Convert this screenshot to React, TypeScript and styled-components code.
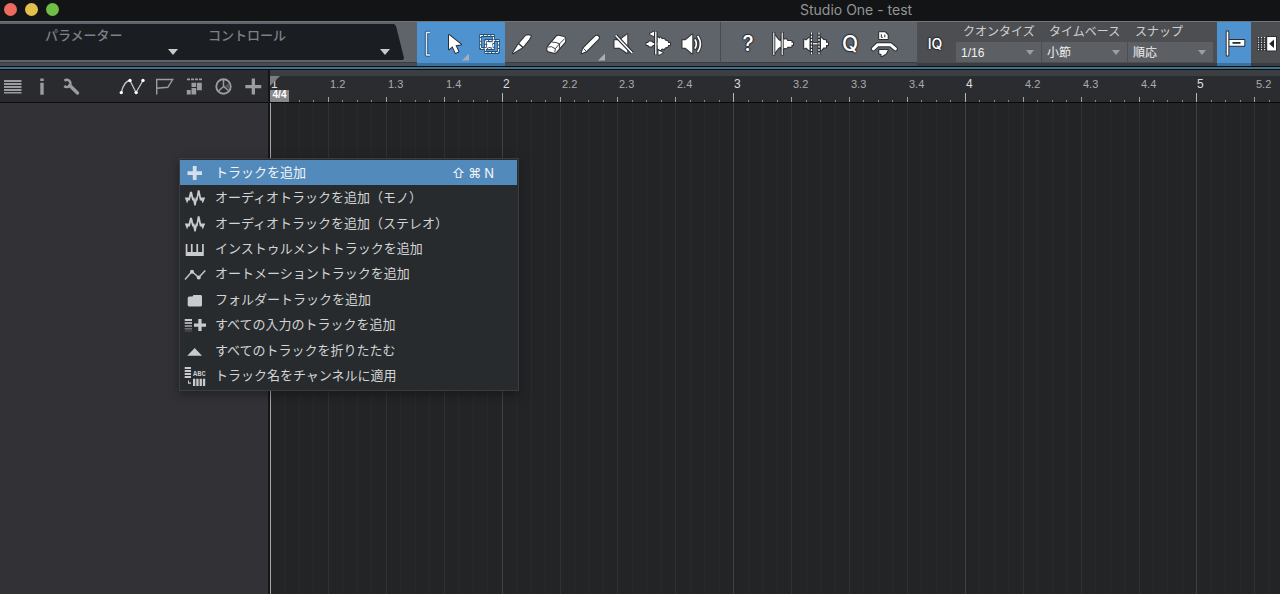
import React from "react";
import styled, { createGlobalStyle, css } from "styled-components";

const GlobalStyle = createGlobalStyle`
  * { box-sizing: border-box; }
  body {
    margin: 0;
    background: #222426;
    color: #d4d5d6;
    font-family: "Liberation Sans", "Noto Sans CJK JP", sans-serif;
    font-size: 12px;
  }
  button, select { font: inherit; color: inherit; border: 0; padding: 0; margin: 0; background: none; }
  svg { display: block; flex: none; }
`;

const Window = styled.div`
  min-height: 100vh;
  display: flex;
  flex-direction: column;
  overflow: hidden;
`;

const TitleBar = styled.header`
  height: 21px;
  flex: none;
  display: flex;
  align-items: center;
  background: #131416;
  padding-bottom: 2px;
`;

const Lights = styled.div`
  width: 800px;
  flex: none;
  display: flex;
  gap: 8px;
  padding-left: 4px;
`;

const Light = styled.button<{ $color: string }>`
  width: 13px;
  height: 13px;
  border-radius: 50%;
  background: ${(p) => p.$color};
`;

const Title = styled.h1`
  margin: 0;
  font: 400 14px/18px Inter, "Liberation Sans", sans-serif;
  color: #949596;
  white-space: nowrap;
`;

const Toolbar = styled.div`
  height: 46px;
  flex: none;
  display: flex;
  background: #5f646b;
  border-top: 1px solid #71757b;
  border-bottom: 1px solid #0e0f10;
  box-shadow: inset 0 -3px 0 #484c52, inset 0 -4px 0 #3a3d42;
`;

const InfoPanel = styled.div`
  width: 405px;
  height: 36px;
  flex: none;
  margin: 2px 12px 0 0;
  display: flex;
  background: #1a1d22;
  clip-path: polygon(0 0, 394px 0, 396px 2px, 404px 34px, 403px 36px, 0 36px);
`;

const InfoColumn = styled.div<{ $width: number; $indent: number; $end: number }>`
  width: ${(p) => p.$width}px;
  flex: none;
  padding-left: ${(p) => p.$indent}px;
  padding-right: ${(p) => p.$end}px;
  display: flex;
  flex-direction: column;
  justify-content: space-between;
  color: #7f8183;
  font-size: 13px;
  line-height: 24px;
  font-weight: 500;
`;

const InfoArrow = styled.button`
  align-self: flex-end;
  width: 12px;
  height: 8px;
  margin-bottom: 4px;
  color: #c9cacb;
`;

const ToolGroup = styled.div<{ $pad?: boolean }>`
  display: flex;
  flex: none;
  height: 41px;
  ${(p) =>
    p.$pad &&
    css`
      padding: 0 16px 0 10px;
      border-left: 1px solid #484c51;
    `}
`;

const ToolButton = styled.button<{ $active?: boolean; $narrow?: boolean }>`
  width: ${(p) => (p.$narrow ? 20 : 34)}px;
  height: ${(p) => (p.$active ? 44 : 41)}px;
  flex: none;
  display: flex;
  align-items: flex-start;
  background: ${(p) => (p.$active ? "#4e92cf" : "transparent")};
  ${(p) => p.$active && "box-shadow: inset 0 -3px 0 #3d6f9c;"}
`;

const Glyph = styled.span<{ $size: number }>`
  width: 100%;
  text-align: center;
  font: 500 ${(p) => p.$size}px/44px Inter, "Liberation Sans", sans-serif;
  color: #fff;
  text-shadow: 0 0 1px #2b2e32, 1px 0 1px #2b2e32, -1px 0 1px #2b2e32, 0 1px 1px #2b2e32, 0 -1px 1px #2b2e32;
`;

const Spacer = styled.div<{ $width: number }>`
  width: ${(p) => p.$width}px;
  flex: none;
`;

const Settings = styled.div`
  flex: 1;
  height: 44px;
  display: flex;
  background: #4c4e52;
  box-shadow: inset 0 -3px 0 #3b3d41;
`;

const Fields = styled.div`
  display: flex;
  flex: none;
  gap: 1px;
  height: 40px;
  padding: 0 4px;
`;

const Field = styled.label`
  width: 85px;
  display: flex;
  flex-direction: column;
  font-size: 12px;
  line-height: 20px;
  color: #cfd0d1;
`;

const FieldName = styled.span`
  height: 20px;
  padding-left: 7px;
`;

const SelectBox = styled.span`
  display: flex;
  align-items: center;
  background: #5c5f64;
  height: 20px;
  padding-right: 6px;
`;

const Select = styled.select`
  flex: 1;
  min-width: 0;
  height: 20px;
  appearance: none;
  padding: 1px 0 0 5px;
  color: #f0f0f0;
`;

const AccentLine = styled.div`
  height: 3px;
  flex: none;
  background: #41708f;
  border-bottom: 1px solid #0c0d0e;
`;

const Workspace = styled.main`
  flex: 1;
  display: flex;
  position: relative;
`;

const TrackColumn = styled.section`
  width: 270px;
  flex: none;
  display: flex;
  flex-direction: column;
  background: #313136;
  border-right: 2px solid #141516;
`;

const TrackHeader = styled.div`
  height: 33px;
  flex: none;
  display: flex;
  background: #292b2e;
  border-bottom: 1px solid #0b0c0d;
`;

const HeaderButton = styled.button<{ $width?: number }>`
  width: ${(p) => p.$width ?? 30}px;
  height: 32px;
  flex: none;
  color: #9b9c9e;
`;

const Timeline = styled.section`
  flex: 1;
  min-width: 0;
  display: flex;
  flex-direction: column;
  overflow: hidden;
`;

const RulerStrip = styled.div`
  height: 6px;
  flex: none;
  background: #3c3f42;
`;

const Ruler = styled.div`
  height: 27px;
  flex: none;
  display: flex;
  position: relative;
  background: #2b2c2f;
  border-bottom: 1px solid #08090a;
`;

const Beat = styled.div`
  flex: none;
  display: flex;
  flex-direction: column;
  justify-content: space-between;
`;

const BeatLabel = styled.span<{ $bar: boolean }>`
  padding: 2px 0 0 ${(p) => (p.$bar ? 1 : 2)}px;
  font-size: ${(p) => (p.$bar ? 12 : 11)}px;
  line-height: 12px;
  color: ${(p) => (p.$bar ? "#dcdddd" : "#aaabad")};
`;

const Ticks = styled.div`
  display: flex;
  align-items: flex-end;
`;

type Level = "bar" | "beat" | "sub";
const tickHeight: Record<Level, number> = { bar: 9, beat: 5, sub: 2 };
const tickColor: Record<Level, string> = { bar: "#b4b5b6", beat: "#a2a3a5", sub: "#8b8c8e" };
const lineColor: Record<Level, string> = { bar: "#3e4042", beat: "#2f3133", sub: "#27292b" };

const Tick = styled.i<{ $level: Level }>`
  flex: none;
  height: ${(p) => tickHeight[p.$level]}px;
  border-left: 1px solid ${(p) => tickColor[p.$level]};
`;

const Marker = styled.svg`
  position: absolute;
  left: 0;
  top: 0;
`;

const Signature = styled.span`
  position: absolute;
  left: 0;
  bottom: 0;
  width: 19px;
  height: 12px;
  background: #868787;
  color: #fff;
  font: 700 10px/10px "Liberation Sans", sans-serif;
  text-align: center;
`;

const Grid = styled.div`
  flex: 1;
  display: flex;
  border-left: 1px solid #a3a3a1;
`;

const GridLine = styled.i<{ $level: Level; $first: boolean }>`
  flex: none;
  border-left: 1px solid ${(p) => (p.$first ? "transparent" : lineColor[p.$level])};
  margin-left: ${(p) => (p.$first ? -1 : 0)}px;
`;

const Menu = styled.div`
  position: absolute;
  left: 179px;
  top: 88px;
  width: 340px;
  height: 233px;
  padding: 1px 0;
  display: grid;
  grid-auto-rows: 1fr;
  background: #272b2d;
  border: 1px solid #3b3e40;
  box-shadow: 0 3px 10px rgba(0, 0, 0, 0.35);
`;

const MenuItem = styled.button<{ $active?: boolean }>`
  display: flex;
  align-items: center;
  gap: 8px;
  margin-right: 1px;
  padding: 0 23px 0 3px;
  text-align: left;
  font-size: 13px;
  line-height: 20px;
  white-space: nowrap;
  color: ${(p) => (p.$active ? "#f2f5f8" : "#d3d4d5")};
  background: ${(p) => (p.$active ? "#528abb" : "transparent")};
  svg { color: ${(p) => (p.$active ? "#d3dfea" : "#c9cacb")}; }
`;

const Shortcut = styled.kbd`
  margin-left: auto;
  display: flex;
  gap: 3px;
  font: 400 13px/20px Inter, "DejaVu Sans", sans-serif;
`;

const DARK = "#2b2e32";

function ToolIcon({ children, width = 34 }: { children: React.ReactNode; width?: number }) {
  return (
    <svg width={width} height="41" viewBox={`0 0 ${width} 41`} fill="#fff" stroke={DARK} strokeWidth="2" strokeLinejoin="round" paintOrder="stroke" aria-hidden="true">
      {children}
    </svg>
  );
}

const Flyout = () => <path d="M25 38.500 32 31.500V38.500Z" fill="#a6b0ba" stroke="none" />;

const tools: { name: string; active?: boolean; narrow?: boolean; icon: React.ReactNode }[] = [
  {
    name: "ツールグループ",
    active: true,
    narrow: true,
    icon: (
      <ToolIcon width={20}>
        <path d="M13 10.500H9.500V33H13" fill="none" stroke="#2f5f8d" strokeWidth="3.400" />
        <path d="M13 10.500H9.500V33H13" fill="none" stroke="#dcebf7" strokeWidth="1.300" />
      </ToolIcon>
    ),
  },
  {
    name: "矢印ツール",
    active: true,
    icon: (
      <ToolIcon>
        <path d="M12 13V27.300L15.500 24.200 18.600 30.900 21.400 29.600 18.500 23.200 24 22.600Z" />
        <Flyout />
      </ToolIcon>
    ),
  },
  {
    name: "範囲ツール",
    active: true,
    icon: (
      <ToolIcon>
        <g fill="none">
          <path d="M9.500 13.500H22.500V26.500H9.500ZM14.500 18.500H27.500V30.500H14.500Z" stroke="#2a4f74" strokeWidth="2.800" />
          <path d="M9.500 13.500H22.500V26.500H9.500ZM14.500 18.500H27.500V30.500H14.500Z" stroke="#eaf3fb" strokeWidth="1.200" strokeDasharray="2.600 1" />
        </g>
        <path d="M15.500 19.500 18.700 20.500 22 19.500 21.200 22.700 22 26 18.700 25.100 15.500 26 16.300 22.700Z" stroke="none" />
      </ToolIcon>
    ),
  },
  {
    name: "分割ツール",
    icon: (
      <ToolIcon>
        <path d="M7.800 31.300 13.400 22.300 17.200 25.500Z" />
        <path d="M14.300 21.300 20.800 13.800Q23.500 12.500 25.800 14.100L24.200 17.300 18.200 24.700Z" />
      </ToolIcon>
    ),
  },
  {
    name: "消しゴムツール",
    icon: (
      <ToolIcon>
        <path d="M8.500 25 17.500 14.500Q18.300 13.500 19.800 13.700L25 15.100Q26.400 15.500 26.300 17L26 20 17 30.300Q16.200 31.100 15 30.800L9.300 29.200Q8.200 28.800 8.300 27.500Z" />
        <path d="M8.600 25.100 12.400 24.700 16.300 26.700 15.800 30.500M16.300 26.700 20.700 21.700M12.800 20.100 17 20.500 20.700 21.900 20.300 26.500M20.700 21.700 26 16.300" fill="none" strokeWidth="0.900" />
      </ToolIcon>
    ),
  },
  {
    name: "ペイントツール",
    icon: (
      <ToolIcon>
        <path d="M8.600 31.300 10.300 26.300 22.600 14Q25 12.800 26 15.500L25.500 17 13.300 29.300Z" />
        <path d="M10.400 26.400 13.200 29.200" fill="none" strokeWidth="0.900" />
        <Flyout />
      </ToolIcon>
    ),
  },
  {
    name: "ミュートツール",
    icon: (
      <ToolIcon>
        <path d="M7.500 18.200H12.600L20.300 12.300V31.100L12.600 25.700H7.500Z" />
        <path d="M8.700 13.500 25.200 31" strokeWidth="3.800" />
        <path d="M8.700 13.500 25.200 31" stroke="#fff" strokeWidth="1.500" />
      </ToolIcon>
    ),
  },
  {
    name: "ベンドツール",
    icon: (
      <ToolIcon>
        <path d="M5.500 21H7L8.500 19.300 11 20 12 21H16.500V15L18.500 16.500 19.500 15.300 21 17.300 23 16.800 24.500 18.700 26.500 19 27.300 21H29V23H27.300L26.500 25 24.500 25.300 23 27.100 21 26.600 19.500 28.200 16.500 26.500V23H12L10.500 24.500 8.500 24.500 7 23H5.500Z" />
        <path d="M13 9.500V14.300L8.500 11.900ZM17.500 28.500V33L22 30.700Z" strokeWidth="1.500" />
        <path d="M14.800 9V33" strokeWidth="3.400" />
        <path d="M14.800 9.500V32.500" stroke="#fff" strokeWidth="1.300" />
      </ToolIcon>
    ),
  },
  {
    name: "試聴ツール",
    icon: (
      <ToolIcon>
        <path d="M7.500 18.300H10.500L17.300 12.500V31.500L10.500 25.700H7.500Z" />
        <path d="M20.200 18Q22.500 22 20.200 26M23 14.500Q27.800 22 23 29.500" fill="none" strokeWidth="3.600" strokeLinecap="round" />
        <path d="M20.200 18Q22.500 22 20.200 26M23 14.500Q27.800 22 23 29.500" fill="none" stroke="#fff" strokeWidth="1.700" strokeLinecap="round" />
      </ToolIcon>
    ),
  },
];

const actions: { name: string; icon: React.ReactNode }[] = [
  { name: "ヘルプ", icon: <Glyph $size={21}>?</Glyph> },
  {
    name: "トランジェント",
    icon: (
      <ToolIcon>
        <path d="M9.500 12.800 13 17.500 15.500 19.500 17 15 19 17.500 21.500 17.300 22.500 19 26.500 19V20.700H28V22.700H26.500V24.700H22.500L21.500 26.300 19 26 17 28.500 15.500 24.500 13 26.500 9.500 31Z" />
        <path d="M8.800 10V33.500M17.200 10V33.500" strokeWidth="3" />
        <path d="M8.800 10.500V33M17.200 10.500V33" stroke="#fff" strokeWidth="1.100" />
      </ToolIcon>
    ),
  },
  {
    name: "無音部を除去",
    icon: (
      <ToolIcon>
        <path d="M5.200 17.500 7 18.500 10.500 15.500V28.500L7 25.500 5.200 26.500ZM22 15.500 24.500 18 27 18.300V20.800H29V23H27V25.500H24.500L22 28.500Z" />
        <path d="M12.300 21.800H20.500" strokeWidth="3.200" />
        <path d="M12.300 21.800H20.500" stroke="#fff" strokeWidth="1.300" />
        <path d="M12.500 10.500V32.500M20 10.500V32.500" strokeWidth="3" />
        <path d="M12.500 10.500V32.500M20 10.500V32.500" stroke="#fff" strokeWidth="1.200" strokeDasharray="2 1.300" />
      </ToolIcon>
    ),
  },
  { name: "クオンタイズ実行", icon: <Glyph $size={21}>Q</Glyph> },
  {
    name: "マクロ",
    icon: (
      <ToolIcon>
        <path d="M12.200 10.300H18L20.700 13V17H12.200Z" />
        <path d="M14.300 12.300V15.300H15.800M17.800 12.500V15.300" fill="none" strokeWidth="1" />
        <path d="M6.300 26.800 10.500 22.800H23.700L28.400 26.800" fill="none" strokeWidth="5" strokeLinecap="round" />
        <path d="M6.300 26.800 10.500 22.800H23.700L28.400 26.800" fill="none" stroke="#fff" strokeWidth="3" strokeLinecap="round" />
        <path d="M12.300 28H20.800L19 31.700 14.500 34.300V32L12.300 31.500Z" />
      </ToolIcon>
    ),
  },
];

const Down = ({ width, height }: { width: number; height: number }) => (
  <svg width={width} height={height} viewBox={`0 0 ${width} ${height}`} fill="currentColor" aria-hidden="true">
    <path d={`M1 1H${width - 1}L${width / 2} ${height - 1}Z`} />
  </svg>
);

const SelectArrow = styled.span`
  color: #9b9ea2;
`;

const fields = [
  { id: "quantize", name: "クオンタイズ", value: "1/16" },
  { id: "timebase", name: "タイムベース", value: "小節" },
  { id: "snap", name: "スナップ", value: "順応" },
];

function HeaderIcon({ width = 30, children }: { width?: number; children: React.ReactNode }) {
  return (
    <svg width={width} height="32" viewBox={`0 0 ${width} 32`} fill="currentColor" aria-hidden="true">
      {children}
    </svg>
  );
}

function MenuIcon({ children }: { children: React.ReactNode }) {
  return (
    <svg width="24" height="22" viewBox="0 0 24 22" fill="currentColor" aria-hidden="true">
      {children}
    </svg>
  );
}

const AudioWave = () => (
  <MenuIcon>
    <path d="M1.800 10.500H6.200L4.100 16.500ZM5 13.500 7 4.800H9L11 13.500H9.200L8 9 6.800 13.500ZM9.500 10.500H11.300L12 13 12.700 10.500H14.500L12.700 18.500H11.300ZM13 13.500 14.700 3.200H16.500L18.700 13.500H16.900L15.600 8 14.500 13.500ZM17.500 10.500H22.200L19.800 16.500Z" />
  </MenuIcon>
);

const menuItems: { label: string; icon: React.ReactNode; keys?: string[] }[] = [
  { label: "トラックを追加", keys: ["⇧", "⌘", "N"], icon: <MenuIcon><path d="M9.800 4H13.600V9.200H19V12.900H13.600V18H9.800V12.900H4.500V9.200H9.800Z" /></MenuIcon> },
  { label: "オーディオトラックを追加（モノ）", icon: <AudioWave /> },
  { label: "オーディオトラックを追加（ステレオ）", icon: <AudioWave /> },
  { label: "インストゥルメントトラックを追加", icon: <MenuIcon><path d="M2.700 6H4.400V14H7.900V6H9.600V14H13.400V6H15.100V14H19.100V6H20.800V18H2.700Z" /></MenuIcon> },
  {
    label: "オートメーショントラックを追加",
    icon: (
      <MenuIcon>
        <path d="M2 16.500 9 8.500 15.700 14.500 22.300 7.500" fill="none" stroke="currentColor" strokeWidth="1.400" />
        <circle cx="9" cy="8.700" r="2" />
        <circle cx="15.700" cy="14.500" r="2" />
      </MenuIcon>
    ),
  },
  { label: "フォルダートラックを追加", icon: <MenuIcon><path d="M4.700 8.500 6 7.500H9.500L10.500 6H18L19 7V16.500L18 17.500H5.700L4.700 16.500Z" /></MenuIcon> },
  {
    label: "すべての入力のトラックを追加",
    icon: (
      <MenuIcon>
        <path d="M1.700 5H9V7H1.700Z" />
        <path d="M1.700 8H9V10H1.700Z" opacity=".8" />
        <path d="M1.700 11H9V13H1.700Z" opacity=".6" />
        <path d="M1.700 14H9V15.500H1.700Z" opacity=".45" />
        <path d="M1.700 16.500H9V17.500H1.700Z" opacity=".3" />
        <path d="M15.300 5H18.600V9.500H23V12.700H18.600V17H15.300V12.700H11V9.500H15.300Z" />
      </MenuIcon>
    ),
  },
  { label: "すべてのトラックを折りたたむ", icon: <MenuIcon><path d="M4.300 15.800 11.700 8 19 15.800Z" /></MenuIcon> },
  {
    label: "トラック名をチャンネルに適用",
    icon: (
      <MenuIcon>
        <path d="M1.700 2H8V4H1.700ZM1.700 5H8V7H1.700ZM1.700 8H8V10H1.700ZM1.700 11H8V13H1.700ZM5 15.500H6V17.500H8V18.800H5Z" />
        <path d="M10 13.700H12.300V21H10ZM13.300 13.700H15.600V21H13.300ZM16.600 13.700H18.900V21H16.600ZM19.900 13.700H22.200V21H19.900Z" />
        <text x="10" y="11" fontSize="7" fontWeight="700" fontFamily="Liberation Mono, monospace">ABC</text>
      </MenuIcon>
    ),
  },
];

/* Zoom level: the length of one 4/4 bar on screen. */
const BAR_WIDTH = 231.6;
const BEATS = 18;
const edge = (sixteenth: number) => Math.round((sixteenth * BAR_WIDTH) / 16);

const beats = Array.from({ length: BEATS }, (_, beat) => ({
  isBar: beat % 4 === 0,
  label: beat % 4 === 0 ? `${beat / 4 + 1}` : `${Math.floor(beat / 4) + 1}.${(beat % 4) + 1}`,
  width: edge(beat * 4 + 4) - edge(beat * 4),
  subs: [0, 1, 2, 3].map((s) => ({
    level: (s > 0 ? "sub" : beat % 4 === 0 ? "bar" : "beat") as Level,
    width: edge(beat * 4 + s + 1) - edge(beat * 4 + s),
  })),
}));

export default function App() {
  return (
    <>
      <GlobalStyle />
      <Window>
        <TitleBar>
          <Lights>
            <Light $color="#ec6a5e" aria-label="閉じる" />
            <Light $color="#e1c04c" aria-label="しまう" />
            <Light $color="#6fbe45" aria-label="拡大" />
          </Lights>
          <Title>Studio One - test</Title>
        </TitleBar>

        <Toolbar>
          <InfoPanel>
            <InfoColumn $width={203} $indent={45} $end={24}>
              パラメーター
              <InfoArrow aria-label="パラメーターを選択"><Down width={12} height={8} /></InfoArrow>
            </InfoColumn>
            <InfoColumn $width={202} $indent={5} $end={14}>
              コントロール
              <InfoArrow aria-label="コントロールを選択"><Down width={12} height={8} /></InfoArrow>
            </InfoColumn>
          </InfoPanel>
          <ToolGroup>
            {tools.map((t) => (
              <ToolButton key={t.name} aria-label={t.name} $active={t.active} $narrow={t.narrow}>{t.icon}</ToolButton>
            ))}
            <Spacer $width={11} />
          </ToolGroup>
          <ToolGroup $pad>
            {actions.map((a) => (
              <ToolButton key={a.name} aria-label={a.name}>{a.icon}</ToolButton>
            ))}
          </ToolGroup>
          <Settings>
            <Spacer $width={1} />
            <ToolButton aria-label="インプットクオンタイズ"><Glyph $size={14}>IQ</Glyph></ToolButton>
            <Fields>
              {fields.map((f) => (
                <Field key={f.id} htmlFor={f.id}>
                  <FieldName>{f.name}</FieldName>
                  <SelectBox>
                    <Select id={f.id} defaultValue={f.value}><option>{f.value}</option></Select>
                    <SelectArrow><Down width={10} height={7} /></SelectArrow>
                  </SelectBox>
                </Field>
              ))}
            </Fields>
            <ToolButton $active aria-label="オートスクロール">
              <ToolIcon>
                <path d="M9.700 9.500H11.300V33.500H9.700ZM12.500 18H27.300V23.800H12.500Z" />
                <path d="M15.500 20.900H23.500" strokeWidth="1.800" />
              </ToolIcon>
            </ToolButton>
            <ToolButton aria-label="カーソル追従">
              <ToolIcon>
                <path d="M7.500 15V29M10.500 15V29M13.500 15V29" strokeWidth="2.600" />
                <path d="M7.500 15V29M10.500 15V29M13.500 15V29" stroke="#e6e6e6" strokeWidth="1.200" strokeDasharray="1.200 1.200" />
                <path d="M16.200 15H25V28.500H16.200Z" />
                <path d="M23 17.500V26L18.200 21.800Z" fill="#222" stroke="none" />
              </ToolIcon>
            </ToolButton>
          </Settings>
        </Toolbar>
        <AccentLine />

        <Workspace>
          <TrackColumn>
            <TrackHeader>
              <HeaderButton $width={27} aria-label="トラックリスト">
                <HeaderIcon width={27}><path d="M4 10H21.500V12H4ZM4 13H21.500V15H4ZM4 16H21.500V18H4ZM4 19H21.500V21H4ZM4 22H21.500V23.500H4Z" /></HeaderIcon>
              </HeaderButton>
              <HeaderButton aria-label="インスペクター">
                <HeaderIcon><path d="M13.300 8.500H16.700V11H13.300ZM13.300 12.800H16.700V24.700H13.300Z" /></HeaderIcon>
              </HeaderButton>
              <HeaderButton aria-label="オプション">
                <HeaderIcon>
                  <path d="M7.500 10.700A3.600 3.600 0 1 1 7.300 16" fill="none" stroke="currentColor" strokeWidth="2.500" />
                  <path d="M12.800 15.500 20.500 23" stroke="currentColor" strokeWidth="3.400" strokeLinecap="round" />
                </HeaderIcon>
              </HeaderButton>
              <Spacer $width={30} />
              <HeaderButton $width={32} aria-label="オートメーションを表示">
                <HeaderIcon width={32}>
                  <path d="M4.300 22.500C6 15 9 11 13 10.500L19 22.500 26 10.500" fill="none" stroke="#c4c5c6" strokeWidth="1.300" />
                  <g fill="#fff"><circle cx="4.300" cy="22.600" r="1.700" /><circle cx="13" cy="10.400" r="1.700" /><circle cx="19.200" cy="22.600" r="1.700" /><circle cx="26" cy="10.400" r="1.700" /></g>
                </HeaderIcon>
              </HeaderButton>
              <HeaderButton aria-label="マーカー">
                <HeaderIcon><path d="M7.700 24.500V9.500H23.700L18.800 17.300 7.700 18.300" fill="none" stroke="currentColor" strokeWidth="1.400" /></HeaderIcon>
              </HeaderButton>
              <HeaderButton aria-label="アレンジ">
                <HeaderIcon><path d="M8 8.500H11V10.300H8ZM12 8.500H15V10.300H12ZM16 8.500H19V10.300H16ZM20 8.500H23V10.300H20ZM12.500 12.800H17.200V17H12.500ZM18 12.800H22.800V20.300H18ZM12.500 18H17.200V24.500H12.500ZM7.800 20H11.700V24.500H7.800Z" /></HeaderIcon>
              </HeaderButton>
              <HeaderButton $width={29} aria-label="テンポ">
                <HeaderIcon width={29}>
                  <circle cx="14.500" cy="16.500" r="7.200" fill="none" stroke="currentColor" strokeWidth="1.900" />
                  <path d="M14.500 16.500 20 13V19Z" opacity=".35" />
                  <path d="M14.500 9.500V16.500L9.500 21M14.500 16.500 19.500 20.500" fill="none" stroke="currentColor" strokeWidth="1.500" />
                </HeaderIcon>
              </HeaderButton>
              <HeaderButton aria-label="トラックを追加">
                <HeaderIcon><path d="M13.700 8.500H17V14.900H23.300V18.200H17V24.500H13.700V18.200H7.300V14.900H13.700Z" /></HeaderIcon>
              </HeaderButton>
            </TrackHeader>
          </TrackColumn>

          <Timeline>
            <RulerStrip />
            <Ruler>
              <Marker width="10" height="10" viewBox="0 0 10 10" aria-hidden="true"><path d="M0 0H10L0 10Z" fill="#7b7d7f" /></Marker>
              {beats.map((b) => (
                <Beat key={b.label} style={{ width: b.width }}>
                  <BeatLabel $bar={b.isBar}>{b.label}</BeatLabel>
                  <Ticks>{b.subs.map((s, i) => <Tick key={i} $level={s.level} style={{ width: s.width }} />)}</Ticks>
                </Beat>
              ))}
              <Signature>4/4</Signature>
            </Ruler>
            <Grid>
              {beats.flatMap((b, n) =>
                b.subs.map((s, i) => (
                  <GridLine key={`${n}-${i}`} $level={s.level} $first={n + i === 0} style={{ width: s.width }} />
                )),
              )}
            </Grid>
          </Timeline>

          <Menu role="menu">
            {menuItems.map((m, i) => (
              <MenuItem key={m.label} role="menuitem" $active={i === 0}>
                {m.icon}
                {m.label}
                {m.keys && <Shortcut>{m.keys.map((k) => <span key={k}>{k}</span>)}</Shortcut>}
              </MenuItem>
            ))}
          </Menu>
        </Workspace>
      </Window>
    </>
  );
}
